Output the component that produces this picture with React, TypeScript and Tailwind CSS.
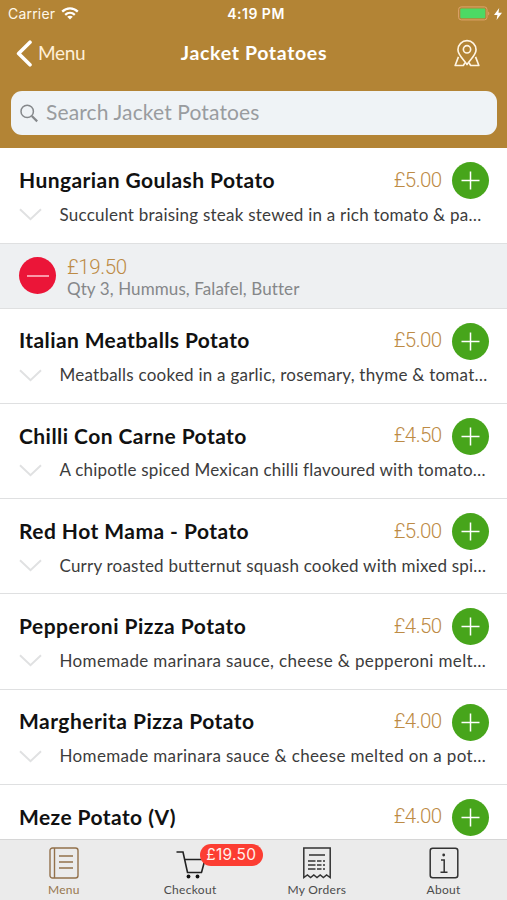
type Item = {
  name: string;
  price: string;
  description: string;
  nameClass: string;
  descriptionClass: string;
};

const firstItem: Item = {
  name: 'Hungarian Goulash Potato',
  price: '£5.00',
  description: 'Succulent braising steak stewed in a rich tomato & pa…',
  nameClass: 'tracking-[0.43px]',
  descriptionClass: 'tracking-[0.23px]',
};

const items: Item[] = [
  {
    name: 'Italian Meatballs Potato',
    price: '£5.00',
    description: 'Meatballs cooked in a garlic, rosemary, thyme & tomat…',
    nameClass: 'tracking-[0.39px]',
    descriptionClass: 'tracking-[0.24px]',
  },
  {
    name: 'Chilli Con Carne Potato',
    price: '£4.50',
    description: 'A chipotle spiced Mexican chilli flavoured with tomato…',
    nameClass: 'tracking-[0.44px]',
    descriptionClass: 'tracking-[0.21px]',
  },
  {
    name: 'Red Hot Mama - Potato',
    price: '£5.00',
    description: 'Curry roasted butternut squash cooked with mixed spi…',
    nameClass: 'tracking-[0.45px]',
    descriptionClass: 'tracking-[0.21px]',
  },
  {
    name: 'Pepperoni Pizza Potato',
    price: '£4.50',
    description: 'Homemade marinara sauce, cheese & pepperoni melt…',
    nameClass: 'tracking-[0.49px]',
    descriptionClass: 'tracking-[0.36px]',
  },
  {
    name: 'Margherita Pizza Potato',
    price: '£4.00',
    description: 'Homemade marinara sauce & cheese melted on a pot…',
    nameClass: 'tracking-[0.47px]',
    descriptionClass: 'tracking-[0.35px]',
  },
  {
    name: 'Meze Potato (V)',
    price: '£4.00',
    description: '',
    nameClass: 'tracking-[0.42px]',
    descriptionClass: 'tracking-[0.2px]',
  },
];

function StatusBar() {
  return (
    <div className="grid h-7 grid-cols-3 items-center pl-2 pr-[5px] font-['Inter'] text-[14px] leading-7 text-[#fff8ea]">
      <div className="flex items-center gap-[6px]">
        <span className="tracking-[0.2px]">Carrier</span>
        <svg className="-mt-0.5" width="18" height="13" viewBox="0 0 18 13" fill="none" stroke="white" strokeWidth="2.3">
          <path d="M1.2 4.6C5.7.3 12.3.3 16.8 4.6" />
          <path d="M4.2 7.8c2.8-2.6 6.8-2.6 9.6 0" />
          <path d="M6.2 9.8c1.6-1.4 4-1.4 5.6 0L9 12.6z" fill="white" stroke="none" />
        </svg>
      </div>
      <span className="pl-0.5 text-center font-semibold tracking-[0.5px] text-white">4:19 PM</span>
      <div className="-mt-px flex items-center justify-end gap-1">
        <svg width="32" height="15" viewBox="0 0 32 15" fill="none">
          <rect x=".6" y=".9" width="28.4" height="13" rx="2.6" stroke="#dda36c" />
          <rect x="2.3" y="2.6" width="25" height="9.6" rx="1" fill="#4cd964" />
          <path d="M30.2 5.4c1.5.5 1.5 3.4 0 4z" fill="#dda36c" />
        </svg>
        <svg width="8" height="12" viewBox="0 0 8 12" fill="white">
          <path d="M5.2 0 0 7h3.4L2.6 12 8 4.8H4.5z" />
        </svg>
      </div>
    </div>
  );
}

function NavBar() {
  return (
    <div className="grid h-[50px] grid-cols-3 items-center pl-4 pr-[27px]">
      <button className="flex items-center gap-[5px] text-[19px] tracking-[-0.3px] text-[#fff0d8]">
        <svg width="17" height="27" viewBox="0 0 17 27" fill="none" stroke="white" strokeWidth="3.6" strokeLinecap="round" strokeLinejoin="round">
          <path d="M14 2.2 2.6 13.5 14 24.8" />
        </svg>
        Menu
      </button>
      <h1 className="flex justify-center pl-3 text-[19.5px] font-bold whitespace-nowrap tracking-[0.65px] text-white">Jacket Potatoes</h1>
      <svg className="justify-self-end" width="26" height="28" viewBox="0 0 27 28" fill="none" stroke="#fff5e4" strokeWidth="1.7" strokeLinejoin="round">
        <path d="M13.5 26C11 21.5 4.1 16.5 4.1 10.6a9.4 9.4 0 0 1 18.8 0c0 5.9-6.9 10.9-9.4 15.4z" />
        <circle cx="13.5" cy="10.2" r="3.8" />
        <path d="M4.6 18 1.2 27h8.5l1.8-3M22.4 18l3.4 9h-8.5l-1.8-3" />
      </svg>
    </div>
  );
}

function SearchBar() {
  return (
    <div className="mx-[10.5px] mt-[13px] flex h-[44px] items-center rounded-[11px] bg-[#eff3f6] pl-[9.5px] text-[21px] text-[#999c9f]">
      <svg width="18" height="19" viewBox="0 0 18 19" fill="none" stroke="#85888b" strokeWidth="1.5">
        <circle cx="7.2" cy="7.4" r="6.2" />
        <path d="m11.8 12 5.4 5.4" strokeWidth="2.2" />
      </svg>
      <span className="-mt-0.5 pl-2 tracking-[0.13px]">Search Jacket Potatoes</span>
    </div>
  );
}

function ItemRow({ item }: { item: Item }) {
  return (
    <div className="h-[95.25px] shrink-0 border-b border-[#dfe0e1] pl-[19px] pr-[18px] whitespace-nowrap">
      <div className="flex h-[65px] items-center">
        <h2 className={`-mt-0.5 text-[21px] font-bold text-[#111] ${item.nameClass}`}>{item.name}</h2>
        <span className="-mt-px ml-auto font-['Roboto'] text-[20.5px] font-light tracking-[-0.6px] text-[#bd8b45]">{item.price}</span>
        <button className="ml-[10.5px] flex size-[37px] items-center justify-center rounded-full bg-[#47a51b]">
          <svg width="19" height="19" viewBox="0 0 19 19" stroke="white" strokeWidth="1.5">
            <path d="M9.5.5v18M.5 9.5h18" />
          </svg>
        </button>
      </div>
      <div className="-mt-[8.5px] flex h-5 items-center">
        <svg width="23" height="13" viewBox="0 0 23 13" fill="none" stroke="#e0e1e2" strokeWidth="2">
          <path d="m1 1.2 10.5 10L22 1.2" />
        </svg>
        <p className={`pl-[17.5px] text-[17px] leading-5 text-[#3c3c3c] ${item.descriptionClass}`}>{item.description}</p>
      </div>
    </div>
  );
}

function OrderRow() {
  return (
    <div className="flex h-[65px] shrink-0 items-center border-b border-[#dfe0e1] bg-[#eef0f2] pl-[19px]">
      <button className="flex size-[37px] items-center justify-center rounded-full bg-[#eb1538]">
        <svg width="22" height="2" viewBox="0 0 22 2">
          <path d="M0 1h22" stroke="#ffc4ce" strokeWidth="1.5" />
        </svg>
      </button>
      <div className="pl-[11px] pt-[3px]">
        <p className="font-['Roboto'] text-[20.5px] font-light leading-[22px] tracking-[-0.4px] text-[#bd8b45]">£19.50</p>
        <p className="text-[17px] leading-[21px] tracking-[0.1px] text-[#858789]">Qty 3, Hummus, Falafel, Butter</p>
      </div>
    </div>
  );
}

function TabBar() {
  return (
    <nav className="grid h-[61px] shrink-0 grid-cols-4 border-t border-[#d6d6d6] bg-[#ebebeb] text-[12px] leading-4 tracking-[0.3px] text-[#4c4c4c]">
      <div className="flex flex-col items-center gap-[3px] pl-px pt-[7px] text-[#97774f]">
        <svg width="30" height="32" viewBox="0 0 30 32" fill="none" stroke="#93714b" strokeWidth="1.4">
          <rect x="1" y="1" width="28" height="30" rx="2.5" />
          <path d="M5.5 1v30M10 9h14M10 15h14M10 21h14" />
        </svg>
        Menu
      </div>
      <div className="relative flex flex-col items-center gap-[3px] pt-[7px]">
        <svg width="30" height="32" viewBox="0 0 30 32" fill="none" stroke="#222" strokeWidth="1.6">
          <path d="M1.5 5H8l4.5 20.5H27M9.5 12.5H30l-3.5 13" />
          <circle cx="13.5" cy="29.5" r="1.9" fill="#111" stroke="none" />
          <circle cx="22.5" cy="29.5" r="1.9" fill="#111" stroke="none" />
        </svg>
        Checkout
        <span className="absolute left-[73px] top-1 h-[22px] w-[63px] rounded-full bg-[#fc3d32] text-center font-['Inter'] text-[15.5px] leading-[22px] tracking-[0.3px] text-[#fff1ec]">£19.50</span>
      </div>
      <div className="flex flex-col items-center gap-[3px] pt-[7px]">
        <svg width="30" height="32" viewBox="0 0 30 32" fill="none" stroke="#333" strokeWidth="1.5">
          <path d="M1.8 30.5V1h26.4v29.5L24.6 28l-3.2 2.5-3.2-2.5-3.2 2.5-3.2-2.5-3.2 2.5L5.4 28z" />
          <path d="M7 8h16M6 14h7.5M15 14h4.5M21 14h2M6 18h7.5M15 18h4.5M21 18h2M6 22h7.5M15 22h4.5M21 22h2" />
        </svg>
        My Orders
      </div>
      <div className="flex flex-col items-center gap-[3px] pt-[7px]">
        <svg width="30" height="32" viewBox="0 0 30 32" fill="none" stroke="#333" strokeWidth="1.5">
          <rect x="1.2" y="1.2" width="27.6" height="29.6" rx="2.5" />
          <path d="M12 13h3.2v12M11.5 25.2h7" />
          <circle cx="14.7" cy="8" r="1.4" fill="#333" stroke="none" />
        </svg>
        About
      </div>
    </nav>
  );
}

export default function App() {
  return (
    <div className="flex h-[900px] w-[507px] flex-col overflow-hidden bg-white font-['Lato',sans-serif]">
      <header className="h-[148.3px] shrink-0 bg-[#b38435]">
        <StatusBar />
        <NavBar />
        <SearchBar />
      </header>
      <main className="flex min-h-0 flex-1 flex-col overflow-hidden">
        <ItemRow item={firstItem} />
        <OrderRow />
        {items.map((item) => (
          <ItemRow key={item.name} item={item} />
        ))}
      </main>
      <TabBar />
    </div>
  );
}
